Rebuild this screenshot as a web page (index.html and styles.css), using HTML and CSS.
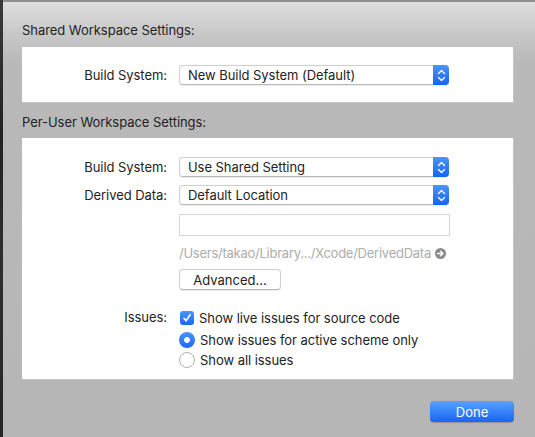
FILE: index.html
```html
<!DOCTYPE html>
<html lang="en">
<head>
    <meta charset="UTF-8">
    <title>Workspace Settings</title>
    <link rel="stylesheet" href="styles.css">
</head>
<body>
    <div class="desk"></div>
    <div class="sheet">
        <!-- Shared -->
        <h2 class="section-title first">Shared Workspace Settings:</h2>
        <div class="box box-shared">
            <div class="form">
                <label class="label">Build System:</label>
                <div class="popup">
                    <span>New Build System (Default)</span>
                    <span class="stepper"><svg width="9" height="13" viewBox="0 0 9 13"><path d="M1.5 4.5 L4.5 1.5 L7.5 4.5 M1.5 8.5 L4.5 11.5 L7.5 8.5" fill="none" stroke="#fff" stroke-width="1.4" stroke-linecap="round" stroke-linejoin="round"/></svg></span>
                </div>
            </div>
        </div>

        <!-- Per-User -->
        <h2 class="section-title">Per-User Workspace Settings:</h2>
        <div class="box box-user">
            <div class="form">
                <label class="label">Build System:</label>
                <div class="popup">
                    <span>Use Shared Setting</span>
                    <span class="stepper"><svg width="9" height="13" viewBox="0 0 9 13"><path d="M1.5 4.5 L4.5 1.5 L7.5 4.5 M1.5 8.5 L4.5 11.5 L7.5 8.5" fill="none" stroke="#fff" stroke-width="1.4" stroke-linecap="round" stroke-linejoin="round"/></svg></span>
                </div>

                <label class="label">Derived Data:</label>
                <div class="popup">
                    <span>Default Location</span>
                    <span class="stepper"><svg width="9" height="13" viewBox="0 0 9 13"><path d="M1.5 4.5 L4.5 1.5 L7.5 4.5 M1.5 8.5 L4.5 11.5 L7.5 8.5" fill="none" stroke="#fff" stroke-width="1.4" stroke-linecap="round" stroke-linejoin="round"/></svg></span>
                </div>

                <span></span>
                <div class="textfield"></div>

                <span></span>
                <div class="path">
                    <span>/Users/takao/Library.../Xcode/DerivedData</span>
                    <svg class="reveal" width="11" height="11" viewBox="0 0 11 11"><circle cx="5.5" cy="5.5" r="5.5" fill="#8a8a8a"/><path d="M2.6 5.5 H7.6 M5.6 3.3 L7.8 5.5 L5.6 7.7" fill="none" stroke="#fff" stroke-width="1.5" stroke-linecap="round" stroke-linejoin="round"/></svg>
                </div>

                <span></span>
                <div><button class="btn">Advanced...</button></div>

                <label class="label issues-label">Issues:</label>
                <div class="options">
                    <div class="option">
                        <span class="checkbox"><svg width="10" height="10" viewBox="0 0 10 10"><path d="M2 5.4 L4.1 7.8 L8.2 1.8" fill="none" stroke="#fff" stroke-width="1.6" stroke-linecap="round" stroke-linejoin="round"/></svg></span>
                        Show live issues for source code
                    </div>
                    <div class="option">
                        <span class="radio on"></span>
                        Show issues for active scheme only
                    </div>
                    <div class="option">
                        <span class="radio"></span>
                        Show all issues
                    </div>
                </div>
            </div>
        </div>

        <div class="footer">
            <button class="btn-done">Done</button>
        </div>
    </div>
</body>
</html>
```

FILE: styles.css
```css
html, body {
    margin: 0;
    height: 100%;
}
body {
    display: flex;
    width: 535px;
    height: 437px;
    overflow: hidden;
    font-family: Inter, "Noto Sans", sans-serif;
    font-size: 13px;
    letter-spacing: -0.05px;
    color: #232323;
    background-color: #2b2b2b;
}
.desk {
    width: 3px;
    background: linear-gradient(to bottom, #3a3a3a, #222 30%, #2e2e2e 60%, #262626);
}
.sheet {
    flex: 1;
    display: flex;
    flex-direction: column;
    padding: 0 21px 0 19px;
    border-top: 2px solid #8f8f8f;
    background: linear-gradient(to bottom, #dedede 0px, #c9c9c9 30px, #b9b9b9 60px, #b6b6b6 100%);
}
.section-title {
    margin: 0;
    font-size: 13px;
    font-weight: normal;
    color: #232323;
    height: 35px;
    line-height: 38px;
}
.section-title.first {
    height: 45px;
    line-height: 56px;
}
.box {
    background-color: #fff;
    border: 1px solid #c4c4c4;
    border-width: 0 1px 1px 0;
}
.box-shared {
    height: 56px;
    padding-top: 18px;
    box-sizing: border-box;
}
.box-user {
    height: 242px;
    padding-top: 19px;
    box-sizing: border-box;
}
.form {
    display: grid;
    grid-template-columns: 145px 270px;
    column-gap: 12px;
    align-items: center;
}
.label {
    text-align: right;
    line-height: 20px;
    margin-bottom: 8px;
}
.popup {
    display: flex;
    align-items: center;
    justify-content: space-between;
    height: 20px;
    box-sizing: border-box;
    padding-left: 8px;
    margin-bottom: 8px;
    background-color: #fff;
    border: 1px solid #d0d0d0;
    border-bottom-color: #b8b8b8;
    border-radius: 4px;
    box-shadow: 0 0.5px 1px rgba(0, 0, 0, 0.08);
}
.stepper {
    display: flex;
    align-items: center;
    justify-content: center;
    width: 16px;
    height: 20px;
    margin: -1px -1px -1px 0;
    border-radius: 0 4px 4px 0;
    background: linear-gradient(to bottom, #4b95fb, #1463f6);
}
.textfield {
    height: 22px;
    box-sizing: border-box;
    margin-top: 1px;
    margin-right: -1px;
    border: 1px solid #d6d6d6;
    background-color: #fff;
}
.path {
    display: flex;
    align-items: center;
    gap: 4px;
    height: 18px;
    margin-top: 8px;
    color: #adadad;
    letter-spacing: -0.25px;
    white-space: nowrap;
}
.reveal {
    flex-shrink: 0;
}
.btn {
    margin-top: 7px;
    width: 102px;
    height: 21px;
    padding: 0;
    font-family: inherit;
    font-size: 13px;
    color: #232323;
    background-color: #fff;
    border: 1px solid #cfcfcf;
    border-bottom-color: #b5b5b5;
    border-radius: 4px;
    box-shadow: 0 0.5px 1px rgba(0, 0, 0, 0.08);
}
.issues-label {
    align-self: start;
    margin-top: 17px;
    margin-bottom: 0;
}
.options {
    margin-top: 18px;
}
.option {
    display: flex;
    align-items: center;
    gap: 5px;
    height: 20px;
    margin-left: 1px;
}
.option:first-child {
    height: 20px;
    margin-bottom: 2px;
}
.checkbox {
    display: flex;
    align-items: center;
    justify-content: center;
    width: 14px;
    height: 14px;
    box-sizing: border-box;
    border-radius: 3px;
    background: linear-gradient(to bottom, #4b95fb, #1a68f6);
}
.radio {
    width: 16px;
    height: 16px;
    box-sizing: border-box;
    margin-left: -1px;
    border-radius: 50%;
    border: 1px solid #b0b0b0;
    background-color: #fff;
}
.radio.on {
    border: none;
    background: radial-gradient(circle, #fff 0 2.6px, transparent 3.2px), linear-gradient(to bottom, #4b95fb, #1a68f6);
}
.footer {
    display: flex;
    justify-content: flex-end;
    padding-top: 21px;
}
.btn-done {
    width: 84px;
    height: 21px;
    padding: 0;
    font-family: inherit;
    font-size: 13px;
    color: #fff;
    border: none;
    border-radius: 4px;
    background: linear-gradient(to bottom, #5aa0fc, #1766f6);
    box-shadow: 0 0.5px 1px rgba(0, 0, 0, 0.2);
}
```
